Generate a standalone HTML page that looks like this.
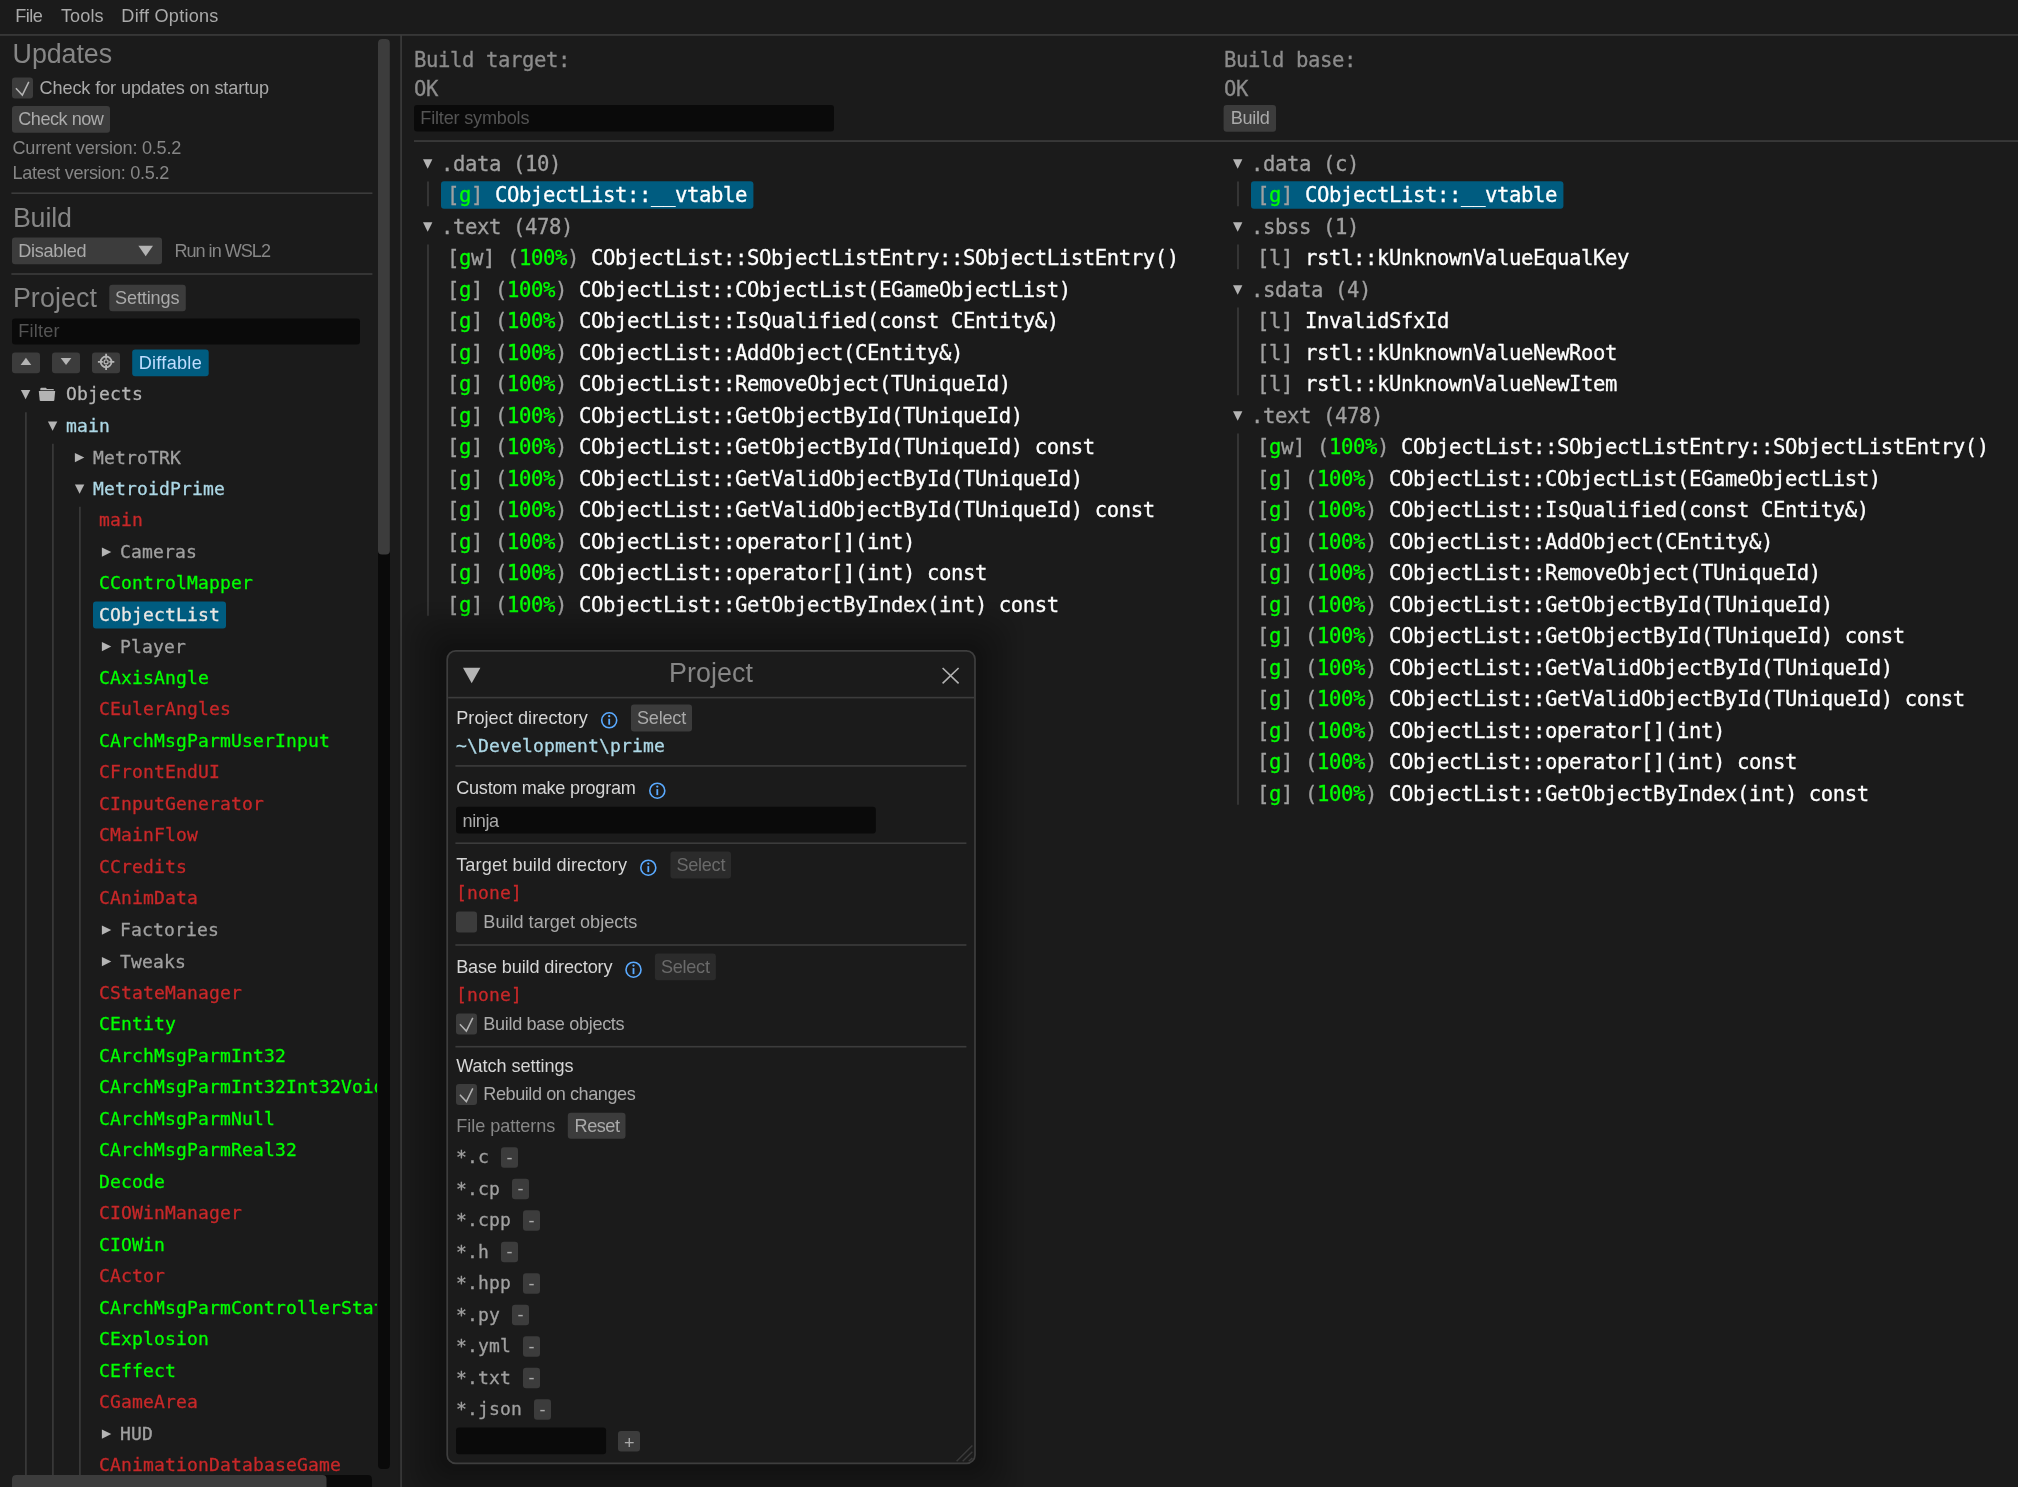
<!DOCTYPE html>
<html><head><meta charset="utf-8"><title>objdiff</title><style>
html,body{margin:0;padding:0;background:#1b1b1b;}
body{width:2018px;height:1487px;position:relative;overflow:hidden;font-family:"Liberation Sans",sans-serif;}
#root{position:absolute;left:0;top:0;width:2018px;height:1487px;overflow:hidden;will-change:transform;}
#root div,#root svg{position:absolute;}
.p,.h,.m,.c{white-space:pre;height:30px;}
.p{font:18.1px/30px "Liberation Sans",sans-serif;}
.h{font:26.8px/30px "Liberation Sans",sans-serif;}
.m{font:18.04px/30px "DejaVu Sans Mono","Liberation Mono",monospace;letter-spacing:0.1390px;color:#b4b4b4;-webkit-text-stroke:0.3px;}
.c{font:20.6px/30px "DejaVu Sans Mono","Liberation Mono",monospace;letter-spacing:-0.4022px;color:#ffffff;-webkit-text-stroke:0.3px;}
.ov{left:0;top:0;pointer-events:none;}
</style></head><body><div id="root">
<svg class="ov" width="2018" height="1487" viewBox="0 0 2018 1487">
<rect x="0.00" y="34.15" width="2018.00" height="1.60" fill="#3c3c3c"/>
<rect x="400.30" y="35.00" width="1.60" height="1452.00" fill="#3c3c3c"/>
<rect x="378.00" y="38.90" width="11.90" height="1430.10" fill="#0a0a0a" rx="4"/>
<rect x="378.00" y="38.90" width="11.90" height="515.50" fill="#3c3c3c" rx="4"/>
<rect x="12.00" y="1475.10" width="359.90" height="16.00" fill="#0a0a0a" rx="4"/>
<rect x="12.00" y="1475.10" width="314.50" height="16.00" fill="#3c3c3c" rx="4"/>
<rect x="12.00" y="77.50" width="21.00" height="21.00" fill="#3c3c3c" rx="3"/>
<rect x="12.00" y="106.00" width="98.00" height="26.70" fill="#3c3c3c" rx="3"/>
<rect x="11.40" y="192.40" width="361.00" height="1.60" fill="#3c3c3c"/>
<rect x="12.00" y="237.60" width="150.00" height="26.60" fill="#3c3c3c" rx="3"/>
<rect x="11.40" y="273.20" width="361.00" height="1.60" fill="#3c3c3c"/>
<rect x="109.30" y="284.70" width="76.50" height="26.60" fill="#3c3c3c" rx="3"/>
<rect x="12.00" y="318.40" width="348.00" height="26.20" fill="#0a0a0a" rx="3"/>
<rect x="12.00" y="352.40" width="28.00" height="20.80" fill="#3c3c3c" rx="3"/>
<rect x="52.00" y="352.40" width="28.00" height="20.80" fill="#3c3c3c" rx="3"/>
<rect x="92.00" y="352.40" width="28.00" height="20.80" fill="#3c3c3c" rx="3"/>
<rect x="132.20" y="349.50" width="76.50" height="26.70" fill="#005c80" rx="3"/>
<rect x="414.00" y="105.00" width="420.00" height="26.60" fill="#0a0a0a" rx="3"/>
<rect x="1223.60" y="105.00" width="52.40" height="26.70" fill="#3c3c3c" rx="3"/>
<rect x="414.00" y="140.20" width="1604.00" height="1.70" fill="#3c3c3c"/>
<rect x="441.00" y="181.30" width="312.40" height="27.50" fill="#005c80" rx="3"/>
<rect x="1251.00" y="181.30" width="312.40" height="27.50" fill="#005c80" rx="3"/>
</svg>
<div class="c" style="left:414.00px;top:45.47px;color:#8c8c8c">Build target:</div>
<div class="c" style="left:414.00px;top:73.97px;color:#8c8c8c">OK</div>
<div class="c" style="left:1224.00px;top:45.47px;color:#8c8c8c">Build base:</div>
<div class="c" style="left:1224.00px;top:73.97px;color:#8c8c8c">OK</div>
<div class="c" style="left:441.00px;top:148.77px;color:#a0a0a0">.data (10)</div>
<div class="c" style="left:447.00px;top:180.27px"><span style="color:#a0a0a0">[</span><span style="color:#00ff00">g</span><span style="color:#a0a0a0">] </span><span style="color:#ffffff">CObjectList::__vtable</span></div>
<div class="c" style="left:441.00px;top:211.77px;color:#a0a0a0">.text (478)</div>
<div class="c" style="left:447.00px;top:243.27px"><span style="color:#a0a0a0">[</span><span style="color:#00ff00">g</span><span style="color:#a0a0a0">w</span><span style="color:#a0a0a0">] </span><span style="color:#a0a0a0">(</span><span style="color:#00ff00">100%</span><span style="color:#a0a0a0">) </span><span style="color:#ffffff">CObjectList::SObjectListEntry::SObjectListEntry()</span></div>
<div class="c" style="left:447.00px;top:274.77px"><span style="color:#a0a0a0">[</span><span style="color:#00ff00">g</span><span style="color:#a0a0a0">] </span><span style="color:#a0a0a0">(</span><span style="color:#00ff00">100%</span><span style="color:#a0a0a0">) </span><span style="color:#ffffff">CObjectList::CObjectList(EGameObjectList)</span></div>
<div class="c" style="left:447.00px;top:306.27px"><span style="color:#a0a0a0">[</span><span style="color:#00ff00">g</span><span style="color:#a0a0a0">] </span><span style="color:#a0a0a0">(</span><span style="color:#00ff00">100%</span><span style="color:#a0a0a0">) </span><span style="color:#ffffff">CObjectList::IsQualified(const CEntity&amp;)</span></div>
<div class="c" style="left:447.00px;top:337.77px"><span style="color:#a0a0a0">[</span><span style="color:#00ff00">g</span><span style="color:#a0a0a0">] </span><span style="color:#a0a0a0">(</span><span style="color:#00ff00">100%</span><span style="color:#a0a0a0">) </span><span style="color:#ffffff">CObjectList::AddObject(CEntity&amp;)</span></div>
<div class="c" style="left:447.00px;top:369.27px"><span style="color:#a0a0a0">[</span><span style="color:#00ff00">g</span><span style="color:#a0a0a0">] </span><span style="color:#a0a0a0">(</span><span style="color:#00ff00">100%</span><span style="color:#a0a0a0">) </span><span style="color:#ffffff">CObjectList::RemoveObject(TUniqueId)</span></div>
<div class="c" style="left:447.00px;top:400.77px"><span style="color:#a0a0a0">[</span><span style="color:#00ff00">g</span><span style="color:#a0a0a0">] </span><span style="color:#a0a0a0">(</span><span style="color:#00ff00">100%</span><span style="color:#a0a0a0">) </span><span style="color:#ffffff">CObjectList::GetObjectById(TUniqueId)</span></div>
<div class="c" style="left:447.00px;top:432.27px"><span style="color:#a0a0a0">[</span><span style="color:#00ff00">g</span><span style="color:#a0a0a0">] </span><span style="color:#a0a0a0">(</span><span style="color:#00ff00">100%</span><span style="color:#a0a0a0">) </span><span style="color:#ffffff">CObjectList::GetObjectById(TUniqueId) const</span></div>
<div class="c" style="left:447.00px;top:463.77px"><span style="color:#a0a0a0">[</span><span style="color:#00ff00">g</span><span style="color:#a0a0a0">] </span><span style="color:#a0a0a0">(</span><span style="color:#00ff00">100%</span><span style="color:#a0a0a0">) </span><span style="color:#ffffff">CObjectList::GetValidObjectById(TUniqueId)</span></div>
<div class="c" style="left:447.00px;top:495.27px"><span style="color:#a0a0a0">[</span><span style="color:#00ff00">g</span><span style="color:#a0a0a0">] </span><span style="color:#a0a0a0">(</span><span style="color:#00ff00">100%</span><span style="color:#a0a0a0">) </span><span style="color:#ffffff">CObjectList::GetValidObjectById(TUniqueId) const</span></div>
<div class="c" style="left:447.00px;top:526.77px"><span style="color:#a0a0a0">[</span><span style="color:#00ff00">g</span><span style="color:#a0a0a0">] </span><span style="color:#a0a0a0">(</span><span style="color:#00ff00">100%</span><span style="color:#a0a0a0">) </span><span style="color:#ffffff">CObjectList::operator[](int)</span></div>
<div class="c" style="left:447.00px;top:558.27px"><span style="color:#a0a0a0">[</span><span style="color:#00ff00">g</span><span style="color:#a0a0a0">] </span><span style="color:#a0a0a0">(</span><span style="color:#00ff00">100%</span><span style="color:#a0a0a0">) </span><span style="color:#ffffff">CObjectList::operator[](int) const</span></div>
<div class="c" style="left:447.00px;top:589.77px"><span style="color:#a0a0a0">[</span><span style="color:#00ff00">g</span><span style="color:#a0a0a0">] </span><span style="color:#a0a0a0">(</span><span style="color:#00ff00">100%</span><span style="color:#a0a0a0">) </span><span style="color:#ffffff">CObjectList::GetObjectByIndex(int) const</span></div>
<div class="c" style="left:1251.00px;top:148.77px;color:#a0a0a0">.data (c)</div>
<div class="c" style="left:1257.00px;top:180.27px"><span style="color:#a0a0a0">[</span><span style="color:#00ff00">g</span><span style="color:#a0a0a0">] </span><span style="color:#ffffff">CObjectList::__vtable</span></div>
<div class="c" style="left:1251.00px;top:211.77px;color:#a0a0a0">.sbss (1)</div>
<div class="c" style="left:1257.00px;top:243.27px"><span style="color:#a0a0a0">[</span><span style="color:#a0a0a0">l</span><span style="color:#a0a0a0">] </span><span style="color:#ffffff">rstl::kUnknownValueEqualKey</span></div>
<div class="c" style="left:1251.00px;top:274.77px;color:#a0a0a0">.sdata (4)</div>
<div class="c" style="left:1257.00px;top:306.27px"><span style="color:#a0a0a0">[</span><span style="color:#a0a0a0">l</span><span style="color:#a0a0a0">] </span><span style="color:#ffffff">InvalidSfxId</span></div>
<div class="c" style="left:1257.00px;top:337.77px"><span style="color:#a0a0a0">[</span><span style="color:#a0a0a0">l</span><span style="color:#a0a0a0">] </span><span style="color:#ffffff">rstl::kUnknownValueNewRoot</span></div>
<div class="c" style="left:1257.00px;top:369.27px"><span style="color:#a0a0a0">[</span><span style="color:#a0a0a0">l</span><span style="color:#a0a0a0">] </span><span style="color:#ffffff">rstl::kUnknownValueNewItem</span></div>
<div class="c" style="left:1251.00px;top:400.77px;color:#a0a0a0">.text (478)</div>
<div class="c" style="left:1257.00px;top:432.27px"><span style="color:#a0a0a0">[</span><span style="color:#00ff00">g</span><span style="color:#a0a0a0">w</span><span style="color:#a0a0a0">] </span><span style="color:#a0a0a0">(</span><span style="color:#00ff00">100%</span><span style="color:#a0a0a0">) </span><span style="color:#ffffff">CObjectList::SObjectListEntry::SObjectListEntry()</span></div>
<div class="c" style="left:1257.00px;top:463.77px"><span style="color:#a0a0a0">[</span><span style="color:#00ff00">g</span><span style="color:#a0a0a0">] </span><span style="color:#a0a0a0">(</span><span style="color:#00ff00">100%</span><span style="color:#a0a0a0">) </span><span style="color:#ffffff">CObjectList::CObjectList(EGameObjectList)</span></div>
<div class="c" style="left:1257.00px;top:495.27px"><span style="color:#a0a0a0">[</span><span style="color:#00ff00">g</span><span style="color:#a0a0a0">] </span><span style="color:#a0a0a0">(</span><span style="color:#00ff00">100%</span><span style="color:#a0a0a0">) </span><span style="color:#ffffff">CObjectList::IsQualified(const CEntity&amp;)</span></div>
<div class="c" style="left:1257.00px;top:526.77px"><span style="color:#a0a0a0">[</span><span style="color:#00ff00">g</span><span style="color:#a0a0a0">] </span><span style="color:#a0a0a0">(</span><span style="color:#00ff00">100%</span><span style="color:#a0a0a0">) </span><span style="color:#ffffff">CObjectList::AddObject(CEntity&amp;)</span></div>
<div class="c" style="left:1257.00px;top:558.27px"><span style="color:#a0a0a0">[</span><span style="color:#00ff00">g</span><span style="color:#a0a0a0">] </span><span style="color:#a0a0a0">(</span><span style="color:#00ff00">100%</span><span style="color:#a0a0a0">) </span><span style="color:#ffffff">CObjectList::RemoveObject(TUniqueId)</span></div>
<div class="c" style="left:1257.00px;top:589.77px"><span style="color:#a0a0a0">[</span><span style="color:#00ff00">g</span><span style="color:#a0a0a0">] </span><span style="color:#a0a0a0">(</span><span style="color:#00ff00">100%</span><span style="color:#a0a0a0">) </span><span style="color:#ffffff">CObjectList::GetObjectById(TUniqueId)</span></div>
<div class="c" style="left:1257.00px;top:621.27px"><span style="color:#a0a0a0">[</span><span style="color:#00ff00">g</span><span style="color:#a0a0a0">] </span><span style="color:#a0a0a0">(</span><span style="color:#00ff00">100%</span><span style="color:#a0a0a0">) </span><span style="color:#ffffff">CObjectList::GetObjectById(TUniqueId) const</span></div>
<div class="c" style="left:1257.00px;top:652.77px"><span style="color:#a0a0a0">[</span><span style="color:#00ff00">g</span><span style="color:#a0a0a0">] </span><span style="color:#a0a0a0">(</span><span style="color:#00ff00">100%</span><span style="color:#a0a0a0">) </span><span style="color:#ffffff">CObjectList::GetValidObjectById(TUniqueId)</span></div>
<div class="c" style="left:1257.00px;top:684.27px"><span style="color:#a0a0a0">[</span><span style="color:#00ff00">g</span><span style="color:#a0a0a0">] </span><span style="color:#a0a0a0">(</span><span style="color:#00ff00">100%</span><span style="color:#a0a0a0">) </span><span style="color:#ffffff">CObjectList::GetValidObjectById(TUniqueId) const</span></div>
<div class="c" style="left:1257.00px;top:715.77px"><span style="color:#a0a0a0">[</span><span style="color:#00ff00">g</span><span style="color:#a0a0a0">] </span><span style="color:#a0a0a0">(</span><span style="color:#00ff00">100%</span><span style="color:#a0a0a0">) </span><span style="color:#ffffff">CObjectList::operator[](int)</span></div>
<div class="c" style="left:1257.00px;top:747.27px"><span style="color:#a0a0a0">[</span><span style="color:#00ff00">g</span><span style="color:#a0a0a0">] </span><span style="color:#a0a0a0">(</span><span style="color:#00ff00">100%</span><span style="color:#a0a0a0">) </span><span style="color:#ffffff">CObjectList::operator[](int) const</span></div>
<div class="c" style="left:1257.00px;top:778.77px"><span style="color:#a0a0a0">[</span><span style="color:#00ff00">g</span><span style="color:#a0a0a0">] </span><span style="color:#a0a0a0">(</span><span style="color:#00ff00">100%</span><span style="color:#a0a0a0">) </span><span style="color:#ffffff">CObjectList::GetObjectByIndex(int) const</span></div>
<div class="p" style="left:15.20px;top:1.03px;color:#aaaaaa;letter-spacing:-0.489px;">File</div>
<div class="p" style="left:61.00px;top:1.03px;color:#aaaaaa;letter-spacing:0.070px;">Tools</div>
<div class="p" style="left:121.30px;top:1.03px;color:#aaaaaa;letter-spacing:0.266px;">Diff Options</div>
<div class="h" style="left:12.60px;top:39.21px;color:#868686;letter-spacing:-0.059px;">Updates</div>
<div class="p" style="left:39.50px;top:72.83px;color:#aaaaaa;letter-spacing:-0.102px;">Check for updates on startup</div>
<div class="p" style="left:18.30px;top:104.13px;color:#aaaaaa;letter-spacing:-0.491px;">Check now</div>
<div class="p" style="left:12.50px;top:133.23px;color:#868686;letter-spacing:-0.250px;">Current version: 0.5.2</div>
<div class="p" style="left:12.50px;top:157.83px;color:#868686;letter-spacing:-0.307px;">Latest version: 0.5.2</div>
<div class="h" style="left:12.90px;top:202.61px;color:#868686;letter-spacing:-0.139px;">Build</div>
<div class="p" style="left:18.30px;top:235.83px;color:#aaaaaa;letter-spacing:-0.288px;">Disabled</div>
<div class="p" style="left:174.40px;top:235.83px;color:#868686;letter-spacing:-1.001px;">Run in WSL2</div>
<div class="h" style="left:12.90px;top:282.81px;color:#868686;letter-spacing:0.099px;">Project</div>
<div class="p" style="left:115.00px;top:283.23px;color:#aaaaaa;letter-spacing:-0.124px;">Settings</div>
<div class="p" style="left:18.30px;top:315.93px;color:#545454;letter-spacing:0.197px;">Filter</div>
<div class="p" style="left:138.70px;top:348.33px;color:#c0deff;letter-spacing:0.284px;">Diffable</div>
<div class="p" style="left:420.30px;top:102.93px;color:#545454;letter-spacing:-0.185px;">Filter symbols</div>
<div class="p" style="left:1230.80px;top:103.43px;color:#aaaaaa;letter-spacing:-0.307px;">Build</div>
<svg class="ov" width="2018" height="1487" viewBox="0 0 2018 1487">
<polyline points="15.90,88.30 22.35,95.10 28.80,81.90" fill="none" stroke="#b4b4b4" stroke-width="1.5"/>
<polygon points="138.40,245.80 153.00,245.80 145.70,256.20" fill="#b4b4b4"/>
<polygon points="20.60,365.00 31.30,365.00 25.95,357.70" fill="#b4b4b4"/>
<polygon points="60.70,358.00 71.40,358.00 66.05,365.00" fill="#b4b4b4"/>
<g fill="none" stroke="#b4b4b4"><circle cx="106.1" cy="361.9" r="5.4" stroke-width="1.8"/><circle cx="106.1" cy="361.9" r="2" stroke-width="1.3"/><path d="M106.1 353.8v5M106.1 365v5M97.9 361.9h5M109.3 361.9h5" stroke-width="1.8"/></g>
<polygon points="423.00,159.30 432.40,159.30 427.70,168.70" fill="#b4b4b4"/>
<line x1="428.00" y1="181.60" x2="428.00" y2="206.20" stroke="#3c3c3c" stroke-width="1.6"/>
<polygon points="423.00,222.30 432.40,222.30 427.70,231.70" fill="#b4b4b4"/>
<line x1="428.00" y1="244.60" x2="428.00" y2="615.70" stroke="#3c3c3c" stroke-width="1.6"/>
<polygon points="1233.00,159.30 1242.40,159.30 1237.70,168.70" fill="#b4b4b4"/>
<line x1="1238.00" y1="181.60" x2="1238.00" y2="206.20" stroke="#3c3c3c" stroke-width="1.6"/>
<polygon points="1233.00,222.30 1242.40,222.30 1237.70,231.70" fill="#b4b4b4"/>
<line x1="1238.00" y1="244.60" x2="1238.00" y2="269.20" stroke="#3c3c3c" stroke-width="1.6"/>
<polygon points="1233.00,285.30 1242.40,285.30 1237.70,294.70" fill="#b4b4b4"/>
<line x1="1238.00" y1="307.60" x2="1238.00" y2="395.20" stroke="#3c3c3c" stroke-width="1.6"/>
<polygon points="1233.00,411.30 1242.40,411.30 1237.70,420.70" fill="#b4b4b4"/>
<line x1="1238.00" y1="433.60" x2="1238.00" y2="804.70" stroke="#3c3c3c" stroke-width="1.6"/>
</svg>
<div id="tree" style="left:0;top:377px;width:377px;height:1098px;overflow:hidden"><div style="left:0;top:-377px;width:900px;height:1487px">
<svg class="ov" width="2018" height="1487" viewBox="0 0 2018 1487">
<rect x="93.00" y="601.40" width="133.00" height="27.20" fill="#005c80" rx="3"/>
</svg>
<div class="m" style="left:66.00px;top:378.86px;color:#b4b4b4">Objects</div>
<div class="m" style="left:66.00px;top:411.36px;color:#add8e6">main</div>
<div class="m" style="left:93.00px;top:442.86px;color:#a0a0a0">MetroTRK</div>
<div class="m" style="left:93.00px;top:474.36px;color:#add8e6">MetroidPrime</div>
<div class="m" style="left:99.00px;top:505.16px;color:#c82829">main</div>
<div class="m" style="left:120.00px;top:537.36px;color:#a0a0a0">Cameras</div>
<div class="m" style="left:99.00px;top:568.16px;color:#00ff00">CControlMapper</div>
<div class="m" style="left:99.00px;top:599.66px;color:#ece8e4">CObjectList</div>
<div class="m" style="left:120.00px;top:631.86px;color:#a0a0a0">Player</div>
<div class="m" style="left:99.00px;top:662.66px;color:#00ff00">CAxisAngle</div>
<div class="m" style="left:99.00px;top:694.16px;color:#c82829">CEulerAngles</div>
<div class="m" style="left:99.00px;top:725.66px;color:#00ff00">CArchMsgParmUserInput</div>
<div class="m" style="left:99.00px;top:757.16px;color:#c82829">CFrontEndUI</div>
<div class="m" style="left:99.00px;top:788.66px;color:#c82829">CInputGenerator</div>
<div class="m" style="left:99.00px;top:820.16px;color:#c82829">CMainFlow</div>
<div class="m" style="left:99.00px;top:851.66px;color:#c82829">CCredits</div>
<div class="m" style="left:99.00px;top:883.16px;color:#c82829">CAnimData</div>
<div class="m" style="left:120.00px;top:915.36px;color:#a0a0a0">Factories</div>
<div class="m" style="left:120.00px;top:946.86px;color:#a0a0a0">Tweaks</div>
<div class="m" style="left:99.00px;top:977.66px;color:#c82829">CStateManager</div>
<div class="m" style="left:99.00px;top:1009.16px;color:#00ff00">CEntity</div>
<div class="m" style="left:99.00px;top:1040.66px;color:#00ff00">CArchMsgParmInt32</div>
<div class="m" style="left:99.00px;top:1072.16px;color:#00ff00">CArchMsgParmInt32Int32VoidPtr</div>
<div class="m" style="left:99.00px;top:1103.66px;color:#00ff00">CArchMsgParmNull</div>
<div class="m" style="left:99.00px;top:1135.16px;color:#00ff00">CArchMsgParmReal32</div>
<div class="m" style="left:99.00px;top:1166.66px;color:#00ff00">Decode</div>
<div class="m" style="left:99.00px;top:1198.16px;color:#c82829">CIOWinManager</div>
<div class="m" style="left:99.00px;top:1229.66px;color:#00ff00">CIOWin</div>
<div class="m" style="left:99.00px;top:1261.16px;color:#c82829">CActor</div>
<div class="m" style="left:99.00px;top:1292.66px;color:#00ff00">CArchMsgParmControllerState</div>
<div class="m" style="left:99.00px;top:1324.16px;color:#00ff00">CExplosion</div>
<div class="m" style="left:99.00px;top:1355.66px;color:#00ff00">CEffect</div>
<div class="m" style="left:99.00px;top:1387.16px;color:#c82829">CGameArea</div>
<div class="m" style="left:120.00px;top:1419.36px;color:#a0a0a0">HUD</div>
<div class="m" style="left:99.00px;top:1450.16px;color:#c82829">CAnimationDatabaseGame</div>
<svg class="ov" width="2018" height="1487" viewBox="0 0 2018 1487">
<polygon points="20.90,389.90 30.30,389.90 25.60,399.30" fill="#b4b4b4"/>
<polygon points="47.90,421.40 57.30,421.40 52.60,430.80" fill="#b4b4b4"/>
<polygon points="74.90,452.90 84.30,457.60 74.90,462.30" fill="#b4b4b4"/>
<polygon points="74.90,484.40 84.30,484.40 79.60,493.80" fill="#b4b4b4"/>
<polygon points="101.90,547.40 111.30,552.10 101.90,556.80" fill="#b4b4b4"/>
<polygon points="101.90,641.90 111.30,646.60 101.90,651.30" fill="#b4b4b4"/>
<polygon points="101.90,925.40 111.30,930.10 101.90,934.80" fill="#b4b4b4"/>
<polygon points="101.90,956.90 111.30,961.60 101.90,966.30" fill="#b4b4b4"/>
<polygon points="101.90,1429.40 111.30,1434.10 101.90,1438.80" fill="#b4b4b4"/>
<path d="M40.3 390.2V388.9Q40.3 387.7 41.5 387.7H45.8L47 388.9H53Q54 388.9 54 390.2Z" fill="#b4b4b4"/><path d="M38.8 391.1H55.2L54.3 400.3Q54.2 401.1 53.4 401.1H40.6Q39.8 401.1 39.7 400.3Z" fill="#b4b4b4"/>
<line x1="25.90" y1="412.20" x2="25.90" y2="1502.10" stroke="#3c3c3c" stroke-width="1.6"/>
<line x1="52.90" y1="443.70" x2="52.90" y2="1502.10" stroke="#3c3c3c" stroke-width="1.6"/>
<line x1="79.90" y1="506.70" x2="79.90" y2="1502.10" stroke="#3c3c3c" stroke-width="1.6"/>
</svg>
</div></div>
<div style="left:447.20px;top:650.80px;width:527.80px;height:812.60px;background:#1b1b1b;border-radius:9px;box-shadow:0 0 3px 48px rgba(0,0,0,0.0157),0 0 3px 44px rgba(0,0,0,0.0318),0 0 3px 40px rgba(0,0,0,0.0329),0 0 3px 36px rgba(0,0,0,0.0340),0 0 3px 32px rgba(0,0,0,0.0352),0 0 3px 28px rgba(0,0,0,0.0365),0 0 3px 24px rgba(0,0,0,0.0379),0 0 3px 20px rgba(0,0,0,0.0393),0 0 3px 16px rgba(0,0,0,0.0410),0 0 3px 12px rgba(0,0,0,0.0427),0 0 3px 8px rgba(0,0,0,0.0446),0 0 3px 4px rgba(0,0,0,0.0467);"></div>
<svg class="ov" width="2018" height="1487" viewBox="0 0 2018 1487">
<rect x="447.2" y="650.8" width="527.80" height="812.60" rx="8.5" fill="#1b1b1b" stroke="#3e3e3e" stroke-width="1.7"/>
<rect x="448.20" y="696.80" width="525.80" height="1.60" fill="#3c3c3c"/>
<rect x="631.00" y="704.50" width="61.00" height="27.00" fill="#3c3c3c" rx="3"/>
<rect x="455.40" y="765.10" width="511.00" height="1.60" fill="#3c3c3c"/>
<rect x="456.00" y="806.70" width="419.80" height="26.70" fill="#0a0a0a" rx="3"/>
<rect x="455.40" y="842.40" width="511.00" height="1.60" fill="#3c3c3c"/>
<rect x="670.40" y="851.60" width="60.60" height="26.80" fill="#2b2b2b" rx="3"/>
<rect x="456.00" y="911.40" width="21.00" height="21.00" fill="#3c3c3c" rx="3"/>
<rect x="455.40" y="944.20" width="511.00" height="1.60" fill="#3c3c3c"/>
<rect x="654.90" y="953.40" width="61.00" height="26.80" fill="#2b2b2b" rx="3"/>
<rect x="456.00" y="1013.50" width="21.00" height="21.00" fill="#3c3c3c" rx="3"/>
<rect x="455.40" y="1045.90" width="511.00" height="1.60" fill="#3c3c3c"/>
<rect x="456.00" y="1084.00" width="21.00" height="21.00" fill="#3c3c3c" rx="3"/>
<rect x="567.80" y="1112.70" width="57.70" height="26.10" fill="#3c3c3c" rx="3"/>
<rect x="501.00" y="1147.20" width="17.00" height="20.60" fill="#3c3c3c" rx="3"/>
<rect x="512.00" y="1178.70" width="17.00" height="20.60" fill="#3c3c3c" rx="3"/>
<rect x="523.00" y="1210.20" width="17.00" height="20.60" fill="#3c3c3c" rx="3"/>
<rect x="501.00" y="1241.70" width="17.00" height="20.60" fill="#3c3c3c" rx="3"/>
<rect x="523.00" y="1273.20" width="17.00" height="20.60" fill="#3c3c3c" rx="3"/>
<rect x="512.00" y="1304.70" width="17.00" height="20.60" fill="#3c3c3c" rx="3"/>
<rect x="523.00" y="1336.20" width="17.00" height="20.60" fill="#3c3c3c" rx="3"/>
<rect x="523.00" y="1367.70" width="17.00" height="20.60" fill="#3c3c3c" rx="3"/>
<rect x="534.00" y="1399.20" width="17.00" height="20.60" fill="#3c3c3c" rx="3"/>
<rect x="456.00" y="1427.60" width="150.10" height="26.60" fill="#0a0a0a" rx="3"/>
<rect x="618.00" y="1430.90" width="22.00" height="20.50" fill="#3c3c3c" rx="3"/>
</svg>
<div class="m" style="left:456.00px;top:731.26px;color:#add8e6">~\Development\prime</div>
<div class="m" style="left:456.00px;top:877.66px;color:#c82829">[none]</div>
<div class="m" style="left:456.00px;top:979.66px;color:#c82829">[none]</div>
<div class="m" style="left:456.00px;top:1142.36px;color:#a0a0a0">*.c</div>
<div class="m" style="left:456.00px;top:1173.86px;color:#a0a0a0">*.cp</div>
<div class="m" style="left:456.00px;top:1205.36px;color:#a0a0a0">*.cpp</div>
<div class="m" style="left:456.00px;top:1236.86px;color:#a0a0a0">*.h</div>
<div class="m" style="left:456.00px;top:1268.36px;color:#a0a0a0">*.hpp</div>
<div class="m" style="left:456.00px;top:1299.86px;color:#a0a0a0">*.py</div>
<div class="m" style="left:456.00px;top:1331.36px;color:#a0a0a0">*.yml</div>
<div class="m" style="left:456.00px;top:1362.86px;color:#a0a0a0">*.txt</div>
<div class="m" style="left:456.00px;top:1394.36px;color:#a0a0a0">*.json</div>
<div class="h" style="left:669.00px;top:658.01px;color:#868686;letter-spacing:0.085px;">Project</div>
<div class="p" style="left:456.20px;top:702.73px;color:#d6d6d6;letter-spacing:0.057px;">Project directory</div>
<div class="p" style="left:637.00px;top:702.73px;color:#aaaaaa;letter-spacing:-0.216px;">Select</div>
<div class="p" style="left:456.20px;top:773.13px;color:#d6d6d6;letter-spacing:-0.243px;">Custom make program</div>
<div class="p" style="left:462.50px;top:805.83px;color:#aaaaaa;letter-spacing:-0.387px;">ninja</div>
<div class="p" style="left:456.20px;top:850.13px;color:#d6d6d6;letter-spacing:0.138px;">Target build directory</div>
<div class="p" style="left:676.40px;top:850.13px;color:#6a6a6a;letter-spacing:-0.249px;">Select</div>
<div class="p" style="left:483.30px;top:907.23px;color:#aaaaaa;letter-spacing:0.010px;">Build target objects</div>
<div class="p" style="left:456.20px;top:952.13px;color:#d6d6d6;letter-spacing:-0.135px;">Base build directory</div>
<div class="p" style="left:660.90px;top:952.13px;color:#6a6a6a;letter-spacing:-0.249px;">Select</div>
<div class="p" style="left:483.30px;top:1008.93px;color:#aaaaaa;letter-spacing:-0.326px;">Build base objects</div>
<div class="p" style="left:456.20px;top:1051.13px;color:#d6d6d6;letter-spacing:-0.057px;">Watch settings</div>
<div class="p" style="left:483.30px;top:1079.43px;color:#aaaaaa;letter-spacing:-0.442px;">Rebuild on changes</div>
<div class="p" style="left:456.20px;top:1111.23px;color:#868686;letter-spacing:-0.036px;">File patterns</div>
<div class="p" style="left:574.60px;top:1111.23px;color:#aaaaaa;letter-spacing:-0.476px;">Reset</div>
<div class="p" style="left:506.50px;top:1142.63px;color:#aaaaaa;">-</div>
<div class="p" style="left:517.50px;top:1174.13px;color:#aaaaaa;">-</div>
<div class="p" style="left:528.50px;top:1205.63px;color:#aaaaaa;">-</div>
<div class="p" style="left:506.50px;top:1237.13px;color:#aaaaaa;">-</div>
<div class="p" style="left:528.50px;top:1268.63px;color:#aaaaaa;">-</div>
<div class="p" style="left:517.50px;top:1300.13px;color:#aaaaaa;">-</div>
<div class="p" style="left:528.50px;top:1331.63px;color:#aaaaaa;">-</div>
<div class="p" style="left:528.50px;top:1363.13px;color:#aaaaaa;">-</div>
<div class="p" style="left:539.50px;top:1394.63px;color:#aaaaaa;">-</div>
<div class="p" style="left:624.10px;top:1427.63px;color:#aaaaaa;">+</div>
<svg class="ov" width="2018" height="1487" viewBox="0 0 2018 1487">
<polygon points="463.00,667.80 480.40,667.80 471.70,683.30" fill="#b4b4b4"/>
<line x1="942.60" y1="668.00" x2="958.60" y2="683.40" stroke="#b4b4b4" stroke-width="1.6"/>
<line x1="958.60" y1="668.00" x2="942.60" y2="683.40" stroke="#b4b4b4" stroke-width="1.6"/>
<circle cx="609.20" cy="720.30" r="7.5" fill="none" stroke="#5aaaff" stroke-width="1.6"/><rect x="608.30" y="718.70" width="1.8" height="6" fill="#5aaaff"/><circle cx="609.20" cy="716.20" r="1.15" fill="#5aaaff"/>
<circle cx="657.30" cy="790.70" r="7.5" fill="none" stroke="#5aaaff" stroke-width="1.6"/><rect x="656.40" y="789.10" width="1.8" height="6" fill="#5aaaff"/><circle cx="657.30" cy="786.60" r="1.15" fill="#5aaaff"/>
<circle cx="648.30" cy="867.70" r="7.5" fill="none" stroke="#5aaaff" stroke-width="1.6"/><rect x="647.40" y="866.10" width="1.8" height="6" fill="#5aaaff"/><circle cx="648.30" cy="863.60" r="1.15" fill="#5aaaff"/>
<circle cx="633.50" cy="969.70" r="7.5" fill="none" stroke="#5aaaff" stroke-width="1.6"/><rect x="632.60" y="968.10" width="1.8" height="6" fill="#5aaaff"/><circle cx="633.50" cy="965.60" r="1.15" fill="#5aaaff"/>
<polyline points="459.90,1024.30 466.35,1031.10 472.80,1017.90" fill="none" stroke="#b4b4b4" stroke-width="1.5"/>
<polyline points="459.90,1094.80 466.35,1101.60 472.80,1088.40" fill="none" stroke="#b4b4b4" stroke-width="1.5"/>
<line x1="956.60" y1="1461.20" x2="972.40" y2="1445.40" stroke="#3a3a3a" stroke-width="1.4"/>
<line x1="962.70" y1="1461.20" x2="972.40" y2="1451.70" stroke="#3a3a3a" stroke-width="1.4"/>
<line x1="968.70" y1="1461.20" x2="972.40" y2="1457.90" stroke="#3a3a3a" stroke-width="1.4"/>
</svg>
</div></body></html>
